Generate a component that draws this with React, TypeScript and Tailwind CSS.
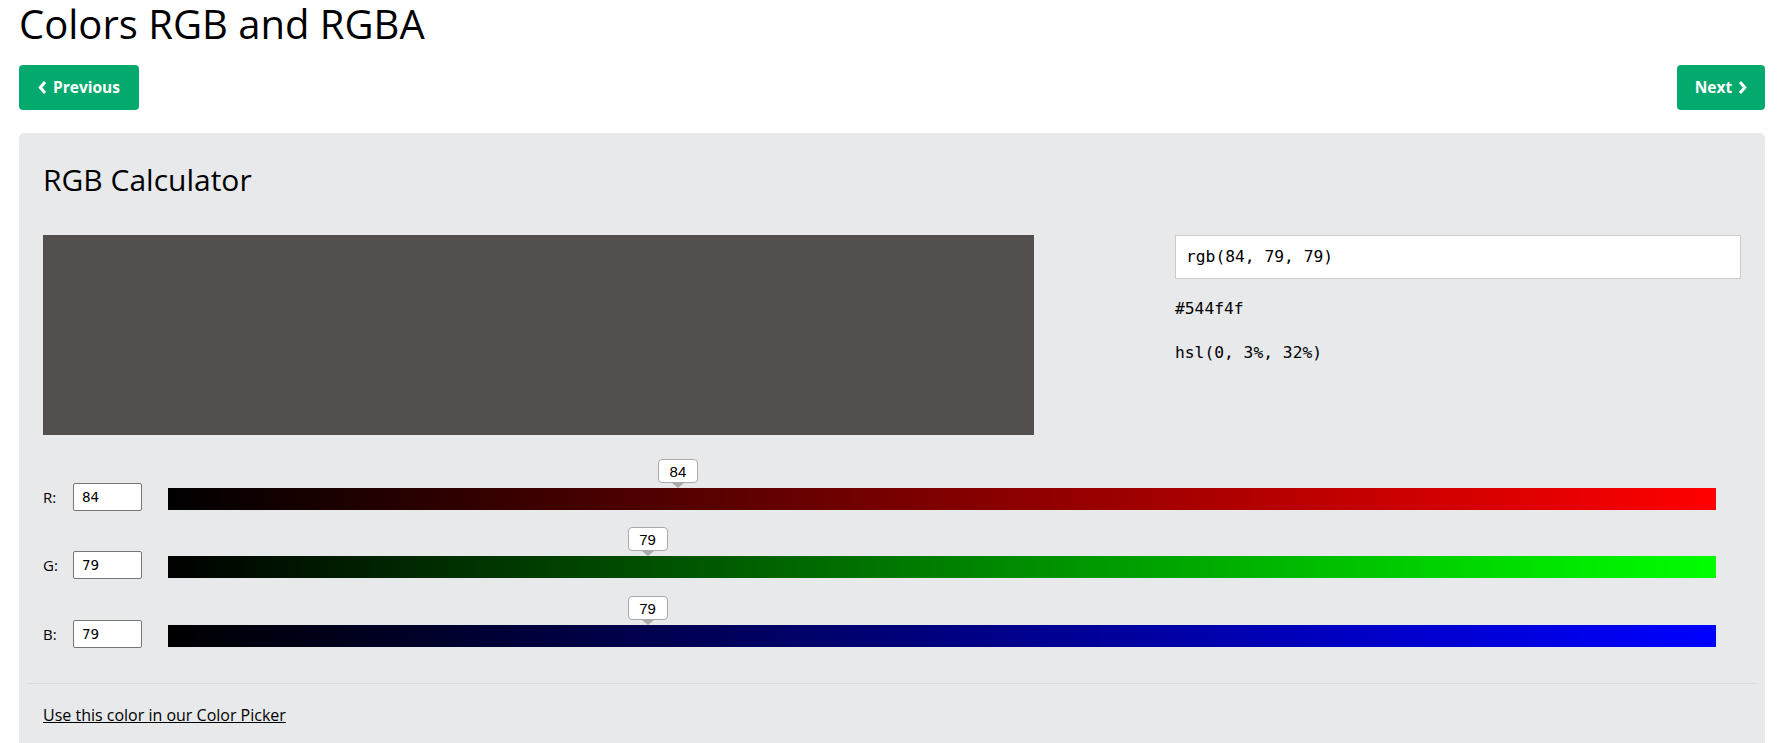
const R = 84
const G = 79
const B = 79

function Chevron({ dir }: { dir: 'left' | 'right' }) {
  return (
    <svg width="9" height="13" viewBox="0 0 9 13" className="shrink-0">
      <polyline
        points={dir === 'left' ? '7,1 2.3,6.5 7,12' : '2,1 6.7,6.5 2,12'}
        fill="none"
        stroke="white"
        strokeWidth="3"
      />
    </svg>
  )
}

function SliderRow({ label, value, track }: { label: string; value: number; track: string }) {
  return (
    <div className="flex h-[28px] items-start">
      <span className="w-[30px] shrink-0 pt-[5px] text-[15px] leading-[18px]">{label}</span>
      <div className="flex h-[28px] w-[69px] shrink-0 items-center rounded-[2px] border border-[#767676] bg-white pl-[8px] font-['DejaVu_Sans',sans-serif] text-[13.5px]">
        {value}
      </div>
      <div className={`relative ml-[26px] mr-[25px] mt-[5px] h-[22px] flex-1 ${track}`}>
        <div
          className="absolute bottom-full flex -translate-x-1/2 flex-col items-center"
          style={{ left: `${(value / 255) * 100}%` }}
        >
          <div className="flex h-[24px] w-[40px] items-center justify-center rounded-[4px] border border-[#aaa] bg-white font-['Liberation_Sans',sans-serif] text-[15px] leading-none">
            {value}
          </div>
          <div className="h-0 w-0 border-x-[6px] border-t-[5px] border-x-transparent border-t-[#aaa]" />
        </div>
      </div>
    </div>
  )
}

export default function App() {
  return (
    <div className="min-h-screen bg-white pl-[19px] pr-[20px] font-['Open_Sans',sans-serif] text-black">
      <h1 className="text-[40px] leading-[48px] font-normal">Colors RGB and RGBA</h1>

      <div className="mt-[17px] flex justify-between">
        <button className="flex h-[45px] w-[120px] items-center justify-center gap-[6px] rounded-[4px] bg-[#04aa6d] text-[15.5px] font-bold text-white">
          <Chevron dir="left" />
          Previous
        </button>
        <button className="flex h-[45px] w-[88px] items-center justify-center gap-[6px] rounded-[4px] bg-[#04aa6d] text-[15.5px] font-bold text-white">
          Next
          <Chevron dir="right" />
        </button>
      </div>

      <div className="mt-[23px] rounded-[5px] bg-[#e7e9eb] pt-[27px] pb-[24px]">
        <div className="px-[24px]">
          <h2 className="text-[30px] leading-[40px] font-normal">RGB Calculator</h2>

          <div className="mt-[35px] flex">
            <div className="w-[1132px] shrink-0">
              <div className="h-[200px] w-[991px] bg-[#544f4f]" />
            </div>
            <div className="flex-1 font-['DejaVu_Sans_Mono',monospace] text-[16.3px]">
              <div className="flex h-[44px] items-center border border-[#ccc] bg-white px-[10px]">
                rgb({R}, {G}, {B})
              </div>
              <div className="mt-[20px] leading-[20px]">#544f4f</div>
              <div className="mt-[24px] leading-[20px]">hsl(0, 3%, 32%)</div>
            </div>
          </div>

          <div className="mt-[48px] flex flex-col gap-[40px]">
            <SliderRow label="R:" value={R} track="bg-[linear-gradient(to_right,#000,#f00)]" />
            <SliderRow label="G:" value={G} track="bg-[linear-gradient(to_right,#000,#0f0)]" />
            <div className="mt-[1px]">
              <SliderRow label="B:" value={B} track="bg-[linear-gradient(to_right,#000,#00f)]" />
            </div>
          </div>
        </div>

        <div className="mx-[8px] mt-[35px] border-t border-[#dadcde]" />

        <div className="mt-[21px] px-[24px] text-[16px] leading-[20px]">
          <a href="#" className="text-black underline">
            Use this color in our Color Picker
          </a>
        </div>
      </div>
    </div>
  )
}
